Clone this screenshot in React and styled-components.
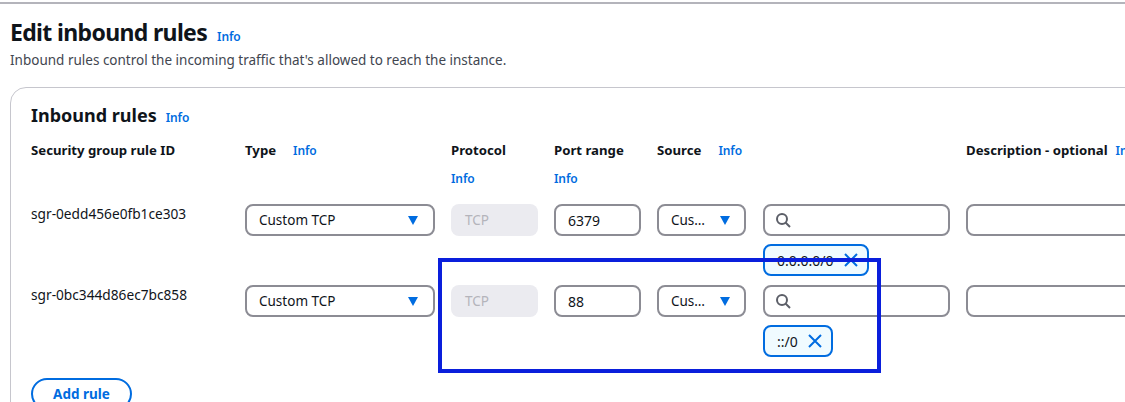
import React from "react";
import styled, { createGlobalStyle } from "styled-components";

const Global = createGlobalStyle`
  html, body { margin: 0; padding: 0; background: #fff; }
  body { width: 1125px; height: 402px; overflow: hidden; font-family: "Noto Sans", "Open Sans", sans-serif; color: #0f141a; }
`;

const Page = styled.div`
  position: relative;
  width: 1125px;
  height: 402px;
  overflow: hidden;
  box-sizing: border-box;
  padding: 2px 0 0 10px;
`;

const TopRule = styled.div`
  height: 2px;
  background: #b4b4bb;
  margin-left: -10px;
`;

const TitleRow = styled.div`
  display: flex;
  align-items: baseline;
  gap: 10px;
  margin-top: 13px;
  line-height: 30px;
`;

const Title = styled.h1`
  margin: 0;
  font-size: 23px;
  font-weight: 700;
  letter-spacing: -0.65px;
`;

const Info = styled.a`
  font-size: 12px;
  font-weight: 600;
  letter-spacing: -0.1px;
  color: #006ce0;
  line-height: 16px;
`;

const Sub = styled.p`
  margin: 3px 0 0;
  font-size: 13.5px;
  line-height: 20px;
  color: #424650;
`;

const Card = styled.section`
  box-sizing: border-box;
  width: 1300px;
  height: 400px;
  margin-top: 17px;
  padding: 14px 0 0 20px;
  border: 1px solid #c6c6cd;
  border-radius: 16px;
`;

const CardTitleRow = styled.div`
  display: flex;
  align-items: baseline;
  gap: 9px;
  line-height: 26px;
`;

const CardTitle = styled.h2`
  margin: 0;
  font-size: 18px;
  font-weight: 700;
`;

const Grid = styled.div`
  display: grid;
  grid-template-columns: 198px 190px 87px 87px 90px 187px 300px;
  column-gap: 16px;
  margin-top: 12px;
`;

const Head = styled.div`
  height: 64px;
`;

const HeadLine = styled.div`
  display: flex;
  align-items: baseline;
  gap: ${p => p.$gap || 0}px;
  font-size: 13.2px;
  font-weight: 700;
  line-height: 20px;
  white-space: nowrap;
`;

const HeadInfo = styled(Info)`
  display: block;
  margin-top: 11px;
`;

const Cell = styled.div`
  height: 81px;
  font-size: 13.5px;
`;

const RuleId = styled.div`
  font-size: 13.7px;
  line-height: 20px;
  color: #0f141a;
`;

const Control = styled.div`
  box-sizing: border-box;
  height: 32px;
  display: flex;
  align-items: center;
  justify-content: space-between;
  padding: 0 ${p => p.$right || 15}px 0 12px;
  border: 2px solid #8c8c94;
  border-radius: 8px;
  background: #fff;
  font-size: 13.5px;
  white-space: nowrap;
`;

const SourceSelect = styled(Control)`
  width: 89px;
  padding-right: 14px;
`;

const PortInput = styled(Control)`
  font-size: 14px;
`;

const Disabled = styled.div`
  box-sizing: border-box;
  height: 32px;
  display: flex;
  align-items: center;
  padding-left: 14px;
  border-radius: 8px;
  background: #ebebf0;
  color: #b4b4bb;
  font-size: 13.5px;
`;

const Caret = styled.svg`
  width: 10px;
  height: 9px;
  fill: #006ce0;
  flex: none;
`;

const SearchBox = styled(Control)`
  justify-content: flex-start;
  padding-left: 10px;
`;

const SearchIcon = styled.svg`
  width: 16px;
  height: 16px;
  fill: none;
  stroke: #5c5f68;
  stroke-width: 2;
`;

const Token = styled.div`
  box-sizing: border-box;
  display: inline-flex;
  align-items: center;
  gap: 10.5px;
  height: 32px;
  margin-top: 8px;
  padding: 0 9px 0 12px;
  border: 2px solid #006ce0;
  border-radius: 8px;
  background: #f0fbff;
  font-size: 14px;
  color: #0f141a;
`;

const Cross = styled.svg`
  width: 14px;
  height: 14px;
  fill: none;
  stroke: #006ce0;
  stroke-width: 2;
  flex: none;
`;

const AddRule = styled.button`
  display: block;
  box-sizing: border-box;
  width: 101px;
  height: 32px;
  padding: 0;
  margin-top: 12px;
  border: 2px solid #006ce0;
  border-radius: 20px;
  background: #fff;
  color: #006ce0;
  font-family: inherit;
  font-size: 13.5px;
  font-weight: 700;
`;

const Highlight = styled.div`
  position: absolute;
  left: 438px;
  top: 258px;
  width: 443px;
  height: 115px;
  box-sizing: border-box;
  border: 4px solid #0a1fdc;
`;

const rules = [
  { id: "sgr-0edd456e0fb1ce303", port: "6379", cidr: "0.0.0.0/0" },
  { id: "sgr-0bc344d86ec7bc858", port: "88", cidr: "::/0" },
];

const caret = (
  <Caret viewBox="0 0 10 9">
    <path d="M0 0h10L5 9z" />
  </Caret>
);

const App = () => (
  <>
    <Global />
    <Page>
      <TopRule />
      <TitleRow>
        <Title>Edit inbound rules</Title>
        <Info>Info</Info>
      </TitleRow>
      <Sub>Inbound rules control the incoming traffic that's allowed to reach the instance.</Sub>
      <Card>
        <CardTitleRow>
          <CardTitle>Inbound rules</CardTitle>
          <Info>Info</Info>
        </CardTitleRow>
        <Grid>
          <Head><HeadLine>Security group rule ID</HeadLine></Head>
          <Head><HeadLine $gap={17}>Type <Info>Info</Info></HeadLine></Head>
          <Head><HeadLine>Protocol</HeadLine><HeadInfo>Info</HeadInfo></Head>
          <Head><HeadLine>Port range</HeadLine><HeadInfo>Info</HeadInfo></Head>
          <Head><HeadLine $gap={17}>Source <Info>Info</Info></HeadLine></Head>
          <Head />
          <Head><HeadLine $gap={8}>Description - optional <Info>Info</Info></HeadLine></Head>
          {rules.map(r => (
            <React.Fragment key={r.id}>
              <Cell><RuleId>{r.id}</RuleId></Cell>
              <Cell><Control>Custom TCP {caret}</Control></Cell>
              <Cell><Disabled>TCP</Disabled></Cell>
              <Cell><PortInput>{r.port}</PortInput></Cell>
              <Cell><SourceSelect>Cus… {caret}</SourceSelect></Cell>
              <Cell>
                <SearchBox>
                  <SearchIcon viewBox="0 0 16 16">
                    <circle cx="7" cy="7" r="5" />
                    <path d="M10.5 10.5L15 15" />
                  </SearchIcon>
                </SearchBox>
                <Token>
                  {r.cidr}
                  <Cross viewBox="0 0 14 14"><path d="M1 1l12 12M13 1L1 13" /></Cross>
                </Token>
              </Cell>
              <Cell><Control /></Cell>
            </React.Fragment>
          ))}
        </Grid>
        <AddRule>Add rule</AddRule>
      </Card>
      <Highlight />
    </Page>
  </>
);

export default App;
